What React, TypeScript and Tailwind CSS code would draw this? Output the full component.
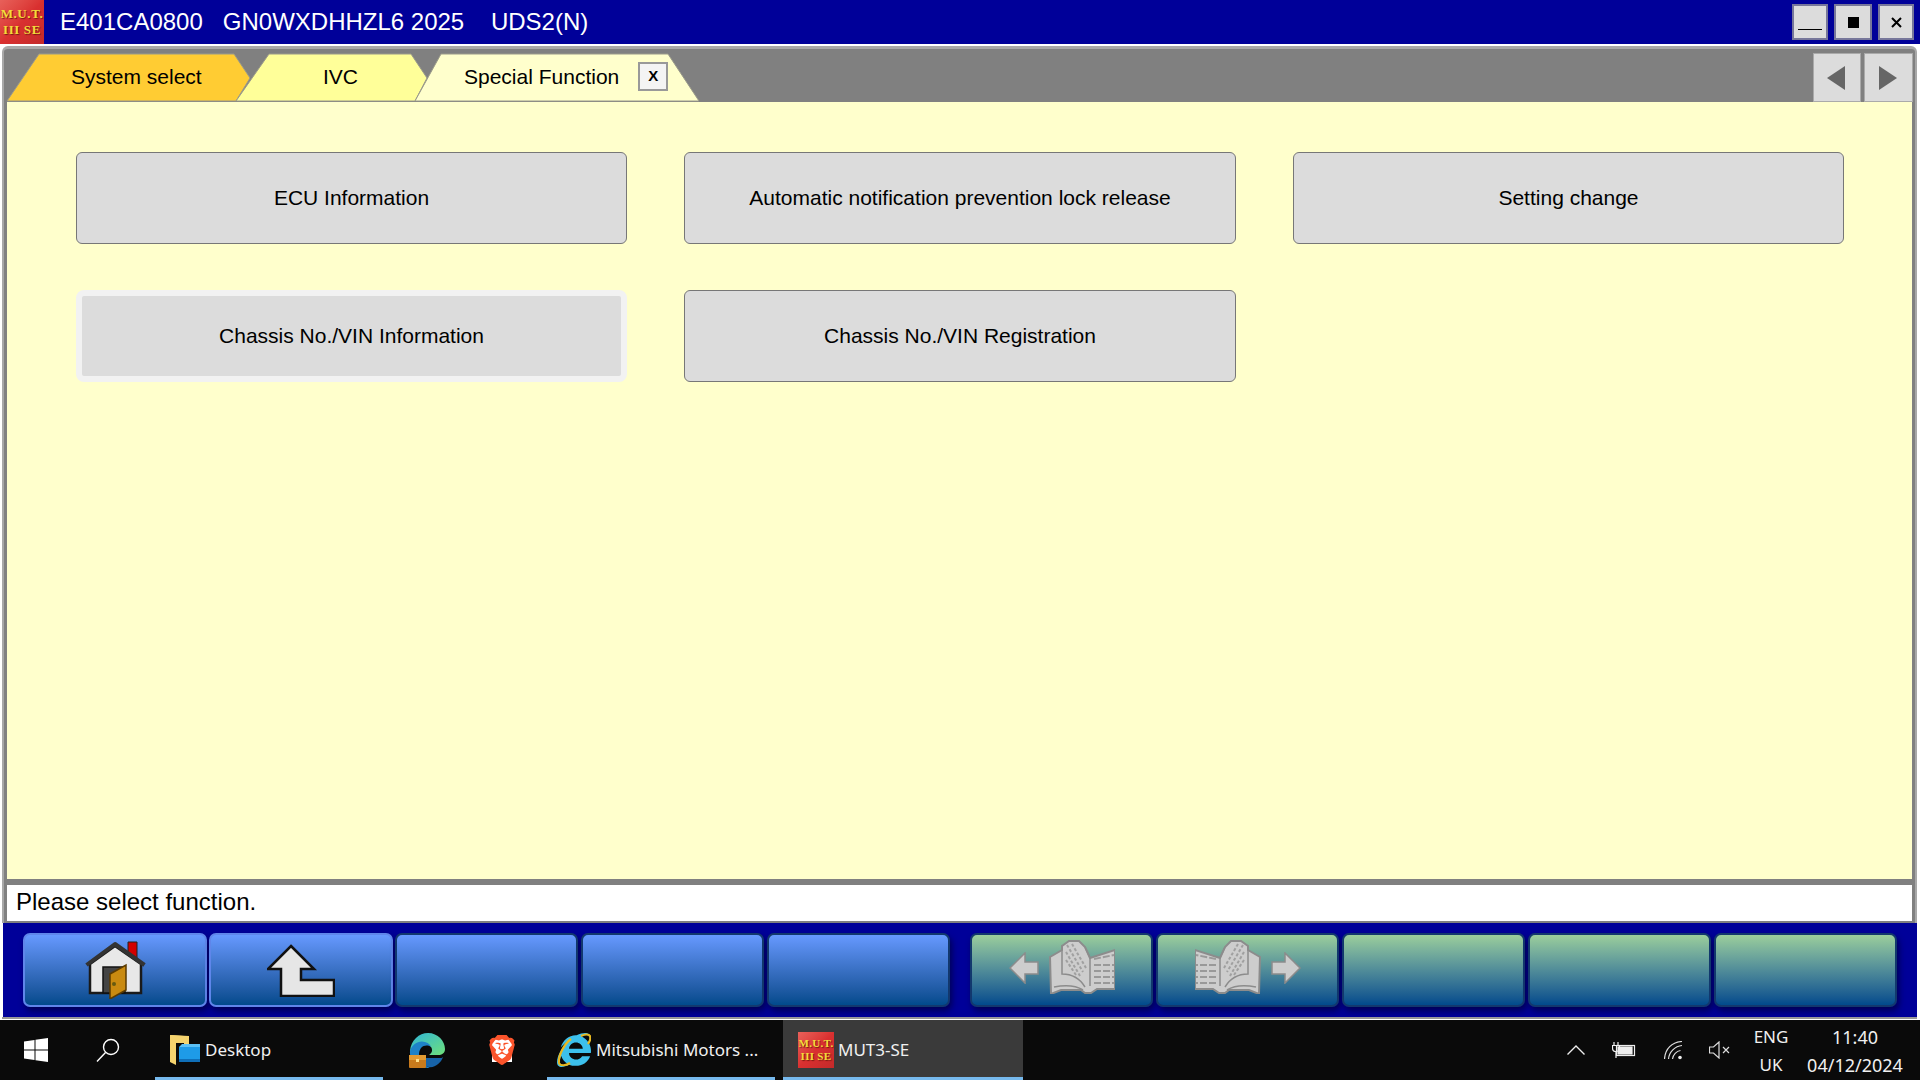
import { FaInternetExplorer } from "react-icons/fa";
import { SiBrave } from "react-icons/si";

const buttons = [
  { label: "ECU Information" },
  { label: "Automatic notification prevention lock release" },
  { label: "Setting change" },
  { label: "Chassis No./VIN Information", focused: true },
  { label: "Chassis No./VIN Registration" },
];

function MutLogo({ size }: { size: "lg" | "sm" }) {
  return (
    <div
      className={`flex flex-col items-center justify-center shrink-0 bg-gradient-to-br from-[#e8605a] via-[#d93030] to-[#c42a2a] font-bold text-[#f2dc3c] [text-shadow:1px_1px_1px_#7a1a10] ${
        size === "lg"
          ? "w-[44px] h-[44px] text-[13px] leading-[16px] tracking-[0.6px]"
          : "w-[36px] h-[36px] text-[11px] leading-[13px] tracking-[0.3px]"
      }`}
      style={{ fontFamily: '"Liberation Serif", serif' }}
    >
      <span>M.U.T.</span>
      <span>III SE</span>
    </div>
  );
}

function WinButton({ children, className }: { children?: React.ReactNode; className: string }) {
  return (
    <div className={`h-[36px] bg-[#dcdcdc] border-2 border-[#77779a] flex items-center justify-center ${className}`}>
      {children}
    </div>
  );
}

function Tab({
  points,
  fill,
  className,
  children,
}: {
  points: string;
  fill: string;
  className: string;
  children: React.ReactNode;
}) {
  return (
    <div className={`relative h-full flex items-center text-[21px] text-black ${className}`}>
      <svg className="absolute inset-0 w-full h-full" preserveAspectRatio="none">
        <polygon points={points} fill={fill} stroke="#9a9a8a" strokeWidth="1" strokeLinejoin="round" />
      </svg>
      <div className="relative flex items-center pb-[2px]">{children}</div>
    </div>
  );
}

function HomeIcon() {
  return (
    <svg width="61" height="58" viewBox="0 0 61 58">
      <path d="M43 12V1h9v17z" fill="#d40000" stroke="#222" strokeWidth="1" />
      <path d="M5 23v29h51V23L30 5z" fill="#e8e8e8" stroke="#1a1a1a" strokeWidth="2.5" />
      <path d="M1.500 24L30 3l29.500 21" fill="none" stroke="#333" strokeWidth="4" strokeLinejoin="round" />
      <rect x="18" y="26" width="22" height="26" fill="#444" stroke="#111" strokeWidth="1.5" />
      <polygon points="25,33 41,24 41,49 25,58" fill="#c98a10" stroke="#5a3a00" strokeWidth="1.5" />
      <circle cx="29" cy="43" r="2" fill="#665a10" />
    </svg>
  );
}

function UpIcon() {
  return (
    <svg width="68" height="53" viewBox="0 0 68 53">
      <polygon
        points="24,2 47,25 34,25 34,36 67,36 67,52 14,52 14,25 1,25"
        fill="#e6e6e6"
        stroke="#111"
        strokeWidth="2.5"
        strokeLinejoin="miter"
      />
    </svg>
  );
}

function BookIcon({ flip }: { flip?: boolean }) {
  return (
    <svg width="66" height="54" viewBox="0 0 66 54" className={flip ? "-scale-x-100" : ""}>
      <path
        d="M1 17L13 10V6L20 1H30L36 7L41 18L66 10V49H48L42 53H36L32 50H12L2 54Z"
        fill="#cdcdcd"
        stroke="#8c8c8c"
        strokeWidth="2"
      />
      <path d="M13 10V34C22 34 30 37 36 47M36 7L41 18V46M5 47C15 45 26 45 34 50" fill="none" stroke="#8c8c8c" strokeWidth="1.5" />
      <path d="M45 19L65 15M45 25H65M45 31H65M45 37H65M45 43H65" stroke="#999" strokeWidth="2" strokeDasharray="7 2" />
      <path d="M18 5L34 32M23 4L37 28M17 12L31 36M17 20L27 35" stroke="#a0a0a0" strokeWidth="2" strokeDasharray="3 2" />
    </svg>
  );
}

function ArrowIcon({ flip }: { flip?: boolean }) {
  return (
    <svg width="30" height="32" viewBox="0 0 30 32" className={`mt-[3px] ${flip ? "-scale-x-100" : ""}`}>
      <polygon points="1,16 16,1 16,10 29,10 29,22 16,22 16,31" fill="#cdcdcd" stroke="#8c8c8c" strokeWidth="1.5" />
    </svg>
  );
}

function BarButton({
  green,
  lit,
  className,
  children,
}: {
  green?: boolean;
  lit?: boolean;
  className?: string;
  children?: React.ReactNode;
}) {
  return (
    <div
      className={`h-[74px] rounded-[7px] border-2 flex items-center justify-center bg-gradient-to-b to-[#014a8c] shadow-[2px_4px_6px_rgba(0,0,40,0.6)] ${
        green ? "from-[#9bce9b]" : "from-[#6699ff]"
      } ${lit ? "w-[184px] border-[#5f86ea]" : "w-[183px] border-[#12386e]"} ${className ?? ""}`}
    >
      {children}
    </div>
  );
}

function EdgeIcon() {
  return (
    <svg width="36" height="36" viewBox="0 0 36 36">
      <defs>
        <linearGradient id="edgeA" x1="0" y1="0" x2="1" y2="1">
          <stop offset="0" stopColor="#2fb5d8" />
          <stop offset="1" stopColor="#6fe07a" />
        </linearGradient>
      </defs>
      <path d="M1 19C2 8 10 1 19 1c10 0 17 8 17 16 0 4-3 6-7 6h-9c3-2 4-5 2-8-2-3-7-4-11-1-4 2-7 6-10 5z" fill="url(#edgeA)" />
      <path d="M1 19c2-7 9-11 15-9 4 1 6 4 6 5-3-2-7-2-10 1-3 4-3 11 3 16 2 2 4 3 6 4C9 36 0 29 1 19z" fill="#1e82c8" />
      <path d="M15 33c-2-3-1-6 2-7h14c1 0 2 0 3-1-2 6-8 11-14 10-2 0-4-1-5-2z" fill="#1763a8" />
      <rect x="0" y="23" width="17" height="13" rx="1" fill="#c87a1c" />
      <rect x="0" y="23" width="17" height="5" fill="#e29a32" />
      <rect x="7" y="27" width="3" height="3" fill="#ffe08a" />
    </svg>
  );
}

function FolderIcon() {
  return (
    <svg width="30" height="31" viewBox="0 0 30 31">
      <path d="M0 0l14 1v8h5V1H1z" fill="#f7d774" />
      <path d="M0 0v27l6 3V8h13V1z" fill="#f5d36e" />
      <rect x="9" y="12" width="21" height="15" fill="#1e9be8" />
      <path d="M9 12l3-3h18v3z" fill="#5cc0f5" />
      <rect x="9" y="24" width="21" height="3" fill="#0f6fb8" />
    </svg>
  );
}

export default function App() {
  return (
    <div
      className="w-[1920px] h-[1080px] flex flex-col overflow-hidden bg-white"
      style={{ fontFamily: '"Liberation Sans", Arial, sans-serif' }}
    >
      <div className="h-[44px] shrink-0 bg-[#000099] flex items-center text-white">
        <MutLogo size="lg" />
        <span className="ml-[16px] text-[24px] whitespace-pre">
          E401CA0800{"   "}GN0WXDHHZL6 2025{"    "}UDS2(N)
        </span>
        <div className="ml-auto flex gap-[6px] mr-[6px]">
          <WinButton className="w-[36px] items-end pb-[8px]">
            <div className="w-[24px] h-[1px] bg-black" />
          </WinButton>
          <WinButton className="w-[38px]">
            <div className="w-[11px] h-[11px] bg-black" />
          </WinButton>
          <WinButton className="w-[36px]">
            <svg width="11" height="11" viewBox="0 0 11 11">
              <path d="M1 1l9 9M10 1l-9 9" stroke="#000" strokeWidth="2" />
            </svg>
          </WinButton>
        </div>
      </div>

      <div className="flex-1 min-h-0 flex flex-col pt-[2px] pl-[2px] pr-[3px] pb-[1px] bg-white">
        <div className="flex-1 min-h-0 flex flex-col rounded-t-[6px] bg-[#808080] border-t-[3px] border-l-[2px] border-r-[2px] border-[#a8a8a8] pl-[3px] pr-[3px]">
          <div className="h-[53px] shrink-0 flex items-end pt-[4px]">
            <Tab points="0,48 32,1 227,1 243,25 229,48" fill="#ffcc33" className="w-[243px] pl-[64px]">
              System select
            </Tab>
            <Tab points="0,48 33,1 175,1 191,25 179,48" fill="#ffff99" className="w-[191px] -ml-[14px] pl-[87px]">
              IVC
            </Tab>
            <Tab points="0,48 26,1 253,1 284,48" fill="#ffffcc" className="w-[284px] -ml-[12px] pl-[49px]">
              <span className="whitespace-nowrap">Special Function</span>
              <span className="ml-[19px] w-[30px] h-[29px] bg-[#f4f4f4] border-2 border-[#999] flex items-center justify-center text-[15px] font-bold">
                X
              </span>
            </Tab>
            <div className="ml-auto -mr-[1px] flex gap-[3px] h-full">
              <div className="w-[48px] h-full bg-[#dcdcdc] flex items-center justify-center pr-[3px] border border-[#aaa]">
                <svg width="18" height="24" viewBox="0 0 18 24">
                  <polygon points="18,0 18,24 0,12" fill="#666" />
                </svg>
              </div>
              <div className="w-[49px] h-full bg-[#dcdcdc] flex items-center justify-center pr-[2px] border border-[#aaa]">
                <svg width="18" height="24" viewBox="0 0 18 24">
                  <polygon points="0,0 0,24 18,12" fill="#666" />
                </svg>
              </div>
            </div>
          </div>

          <div className="flex-1 min-h-0 bg-[#ffffcc] pl-[69px] pt-[50px]">
            <div className="grid grid-cols-[551px_552px_551px] gap-x-[57px] gap-y-[46px]">
              {buttons.map((b) => (
                <div
                  key={b.label}
                  className={`h-[92px] bg-[#dcdcdc] flex items-center justify-center text-[21px] text-black ${
                    b.focused ? "rounded-[8px] border-[6px] border-[#f2f2f2]" : "rounded-[6px] border border-[#777]"
                  }`}
                >
                  {b.label}
                </div>
              ))}
            </div>
          </div>

          <div className="h-[6px] shrink-0" />
          <div className="h-[36px] shrink-0 bg-white flex items-center pl-[9px] pb-[2px] text-[24px] text-black">
            Please select function.
          </div>
          <div className="h-[2px] shrink-0" />
        </div>

        <div className="h-[94px] shrink-0 ml-[1px] bg-[#000099] flex items-start pt-[10px] pl-[20px]">
          <div className="flex gap-[2px]">
            <BarButton lit>
              <HomeIcon />
            </BarButton>
            <BarButton lit>
              <UpIcon />
            </BarButton>
            <BarButton />
            <BarButton className="ml-[1px]" />
            <BarButton className="ml-[1px]" />
          </div>
          <div className="flex gap-[3px] ml-[20px]">
            <BarButton green>
              <div className="flex items-center gap-[10px] mb-[7px]">
                <ArrowIcon />
                <BookIcon />
              </div>
            </BarButton>
            <BarButton green>
              <div className="flex items-center gap-[10px] mb-[7px]">
                <BookIcon flip />
                <ArrowIcon flip />
              </div>
            </BarButton>
            <BarButton green />
            <BarButton green />
            <BarButton green />
          </div>
        </div>
        <div className="h-[2px] shrink-0 bg-[#999]" />
      </div>

      <div
        className="h-[60px] shrink-0 bg-[#0a0a0a] flex items-stretch text-[#f0f0f0] text-[17px]"
        style={{ fontFamily: '"Noto Sans", sans-serif' }}
      >
        <div className="w-[155px] flex items-center pl-[24px] gap-[48px]">
          <svg width="24" height="24" viewBox="0 0 24 24">
            <path d="M0 3.4L10.5 2v9.500H0zM11.500 1.800L24 0v11.500H11.500zM0 12.500h10.500V22L0 20.600zM11.500 12.500H24V24l-12.500-1.800z" fill="#fff" />
          </svg>
          <svg width="24" height="24" viewBox="0 0 24 24" fill="none" stroke="#fff" strokeWidth="1.4">
            <circle cx="15" cy="9" r="7.5" />
            <path d="M9.500 14.500L1 23.500" />
          </svg>
        </div>
        <div className="w-[228px] flex items-center gap-[5px] pl-[15px] pt-[3px] border-b-[3px] border-[#76b9ed]">
          <FolderIcon />
          <span>Desktop</span>
        </div>
        <div className="w-[164px] flex items-center pl-[26px] gap-[42px]">
          <EdgeIcon />
          <div className="relative w-[30px] h-[36px]">
            <div className="absolute left-[5px] top-[6px] w-[20px] h-[24px] bg-white" />
            <SiBrave className="absolute inset-0 w-[30px] h-[36px] text-[#fb542b]" />
          </div>
        </div>
        <div className="w-[228px] flex items-center gap-[5px] pl-[10px] pt-[3px] border-b-[3px] border-[#76b9ed] whitespace-nowrap">
          <div className="relative w-[34px] h-[34px]">
            <FaInternetExplorer className="w-[34px] h-[34px] text-[#3cc0ec]" />
            <svg className="absolute inset-0" width="34" height="34" viewBox="0 0 34 34" fill="none" stroke="#e8b820" strokeWidth="2.2">
              <path d="M14 6C7 11 1 23 2 30c1 3 7 3 11 0" />
              <path d="M24 3c4-2 8-2 9 0 1 2 0 5-2 8" />
            </svg>
          </div>
          <span>Mitsubishi Motors ...</span>
        </div>
        <div className="w-[8px]" />
        <div className="w-[240px] flex items-center gap-[4px] pl-[15px] pt-[3px] bg-[#3a3a3a] border-b-[3px] border-[#76b9ed]">
          <MutLogo size="sm" />
          <span>MUT3-SE</span>
        </div>

        <div className="ml-auto flex items-center pr-[15px]">
          <svg width="18" height="10" viewBox="0 0 18 10" fill="none" stroke="#eee" strokeWidth="1.4" className="mr-[27px]">
            <path d="M0.500 9.500L9 1l8.500 8.500" />
          </svg>
          <svg width="24" height="18" viewBox="0 0 24 18" fill="none" stroke="#eee" strokeWidth="1.2" className="mr-[28px]">
            <rect x="4.5" y="4.5" width="18" height="10" />
            <rect x="6" y="6" width="14" height="7" fill="#eee" />
            <path d="M2 1v3M6 1v3M0.500 4.500h7v2.500a3.500 3.500 0 0 1-7 0zM4 10v7" />
          </svg>
          <svg width="19" height="19" viewBox="0 0 19 19" fill="none" stroke="#ddd" strokeWidth="1.2" className="mr-[26px]">
            <path d="M0.500 18C1 8 8 1 18 0.500M4.500 18C5 11 11 5 18 4.500M8.500 18c.5-4 4-8 8-8.500" />
            <circle cx="16" cy="16.5" r="1.8" fill="#eee" stroke="none" />
          </svg>
          <svg width="21" height="18" viewBox="0 0 21 18" fill="none" stroke="#ddd" strokeWidth="1.2" className="mr-[16px]">
            <path d="M0.500 6h4L10 1v16l-5.500-5h-4zM14 6l6 6M20 6l-6 6" />
          </svg>
          <div className="w-[50px] flex flex-col items-center text-[17px] leading-[28px] pt-[2px]">
            <span>ENG</span>
            <span>UK</span>
          </div>
          <div className="w-[100px] ml-[9px] flex flex-col items-center text-[18px] leading-[28px] pt-[1px]">
            <span>11:40</span>
            <span>04/12/2024</span>
          </div>
        </div>
      </div>
    </div>
  );
}
